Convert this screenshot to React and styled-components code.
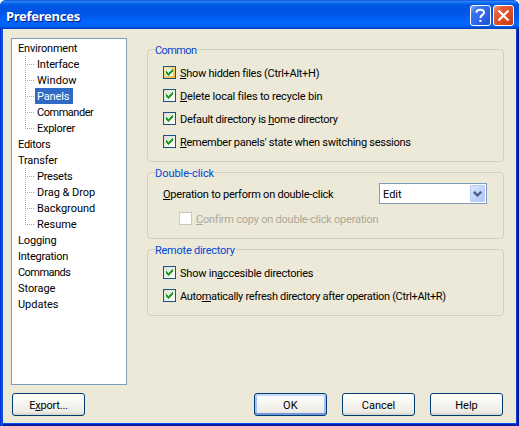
import React from "react";
import styled, { createGlobalStyle, css } from "styled-components";

const GlobalStyle = createGlobalStyle`
  * { box-sizing: border-box; }
  body { margin: 0; background: #fff; overflow: hidden; }
`;

const Window = styled.div`
  width: 519px;
  height: 426px;
  display: flex;
  flex-direction: column;
  padding: 0 3px 3px;
  background: linear-gradient(to right, #0831d9 0 1px, #0a50ea 1px 2px, #0855dd 2px 516px, #0441d8 516px 517px, #001ea0 517px 518px, #00138c 518px);
  border-radius: 6px 6px 0 0;
  overflow: hidden;
  font: 11px/13px Roboto, "Liberation Sans", sans-serif;
  color: #000;
`;

const TitleBar = styled.header`
  height: 29px;
  flex: none;
  margin: 0 -3px;
  padding: 2px 5px 0 6px;
  display: flex;
  align-items: center;
  gap: 2px;
  background: linear-gradient(
    to bottom,
    #0a51d8 0, #2b83f3 1.5px, #0f6af0 3px, #0058e6 5px, #0054e3 9px,
    #0055e5 13px, #0060f8 19px, #0066ff 24px, #0062f8 26px, #0048cc 28px, #003cbc 29px
  );
`;

const Title = styled.h1`
  flex: 1;
  margin: 0;
  font: bold 13px/16px "Noto Sans", sans-serif;
  letter-spacing: -0.27px;
  color: #fff;
  text-shadow: 1px 1px 0 #0a1883;
`;

const CaptionButton = styled.button`
  width: 21px;
  height: 21px;
  margin-bottom: 1px;
  padding: 0;
  display: grid;
  place-items: center;
  border: 1px solid #fff;
  border-radius: 3px;
  background: ${(p) =>
    p.$close
      ? "linear-gradient(135deg, #f0a08a 0, #e5603c 22%, #df4a22 60%, #c03a10 100%)"
      : "linear-gradient(135deg, #8cb0f5 0, #3c78f0 22%, #2a63e8 60%, #1c4fd0 100%)"};
`;

const Client = styled.main`
  flex: 1;
  min-height: 0;
  display: flex;
  flex-direction: column;
  justify-content: space-between;
  padding: 9px 11px 7px 8px;
  background: #ece9d8;
  box-shadow: 0 1px 0 #0050ee, 0 3px 0 #001ea0;
`;

const Body = styled.div`
  display: flex;
  gap: 20px;
`;

const Tree = styled.ul`
  width: 116px;
  height: 347px;
  flex: none;
  margin: 0;
  padding: 1px 0 0 4px;
  list-style: none;
  border: 1px solid #7f9db9;
  background: #fff;
`;

const Branch = styled.ul`
  margin: 0;
  padding: 0 0 0 9px;
  list-style: none;
`;

const Leaf = styled.li`
  height: 16px;
  display: flex;
  align-items: center;
  background:
    repeating-linear-gradient(to bottom, #aca899 0 1px, transparent 1px 2px) 0 0 / 1px ${(p) => (p.$last ? 8 : 16)}px no-repeat,
    repeating-linear-gradient(to right, #aca899 0 1px, transparent 1px 2px) 0 8px / 9px 1px no-repeat;
  padding-left: 10px;
`;

const TreeLabel = styled.span`
  display: block;
  width: max-content;
  height: 16px;
  padding: 1px 2px 0;
  line-height: 15px;
  white-space: nowrap;
  letter-spacing: ${(p) => p.$ls || 0}px;
  ${(p) =>
    p.$selected &&
    css`
      padding-right: 4px;
      background: #316ac5;
      color: #fff;
    `}
`;

const Options = styled.section`
  width: 357px;
  display: flex;
  flex-direction: column;
  gap: 10px;
  padding-top: 11px;
`;

const Group = styled.fieldset`
  position: relative;
  display: flex;
  flex-direction: column;
  gap: 10px;
  height: ${(p) => p.$height}px;
  margin: 0;
  padding: ${(p) => p.$top}px 15px 0;
  min-width: 0;
  border: 1px solid #d0d0bf;
  border-radius: 4px;
`;

const Legend = styled.div`
  position: absolute;
  top: -6px;
  left: 7px;
  padding: 0 1px 0 0;
  background: #ece9d8;
  color: #0046d5;
  letter-spacing: ${(p) => p.$ls || 0}px;
`;

const Text = styled.span`
  display: block;
  padding-top: 2px;
  white-space: nowrap;
  letter-spacing: ${(p) => p.$ls || 0}px;
  u {
    text-decoration: underline;
    text-decoration-thickness: 1px;
    text-underline-offset: 1px;
    text-decoration-skip-ink: none;
  }
`;

const OptionRow = styled.label`
  display: flex;
  align-items: center;
  gap: 4px;
  height: 13px;
  margin-left: ${(p) => (p.$indent ? 16 : 0)}px;
  color: ${(p) => (p.$disabled ? "#aca899" : "#000")};
`;

const Box = styled.span`
  width: 13px;
  height: 13px;
  flex: none;
  display: grid;
  place-items: center;
  border: 1px solid ${(p) => (p.$disabled ? "#cac8bb" : "#1c5180")};
  background: ${(p) => (p.$disabled ? "#fff" : "linear-gradient(135deg, #dcdcd7, #fff)")};
  ${(p) =>
    p.$hot &&
    css`
      background:
        linear-gradient(135deg, #ececea, #fff) center / 7px 7px no-repeat,
        linear-gradient(135deg, #fff0cf, #fbc761 60%, #f8b330);
    `}
`;

const SelectRow = styled.div`
  display: flex;
  align-items: center;
  justify-content: space-between;
  height: 21px;
  margin-right: 1px;
  margin-bottom: -2px;
`;

const Select = styled.div`
  width: 108px;
  height: 21px;
  display: flex;
  align-items: center;
  justify-content: space-between;
  padding: 1px 1px 1px 3px;
  border: 1px solid #7f9db9;
  background: #fff;
`;

const DropButton = styled.span`
  width: 15px;
  height: 17px;
  display: grid;
  place-items: center;
  border-radius: 1px;
  border: 1px solid #b9cdf8;
  background: linear-gradient(135deg, #dce8ff, #c2d5fc 50%, #afc6f5);
`;

const Footer = styled.footer`
  display: flex;
  gap: 15px;
  padding: 0 2px 0 1px;
`;

const PushButton = styled.button`
  width: 73px;
  height: 23px;
  padding: 0;
  border: 1px solid #003c74;
  border-radius: 3px;
  background: linear-gradient(to bottom, #fff, #f5f4ef 50%, #ecebe5 85%, #d6d0c5);
  font: inherit;
  color: #000;
  ${(p) =>
    p.$left &&
    css`
      margin-right: auto;
    `}
  ${(p) =>
    p.$primary &&
    css`
      box-shadow: inset 0 2px 0 #c6dbff, inset 0 -2px 0 #7496df, inset 2px 0 0 #a6c1f3, inset -2px 0 0 #a6c1f3;
    `}
`;

const Tick = () => (
  <svg width="7" height="7" viewBox="0 0 7 7" shapeRendering="crispEdges">
    <path
      fill="#21a121"
      d="M0 2h1v3H0zM1 3h1v3H1zM2 4h1v3H2zM3 3h1v3H3zM4 2h1v3H4zM5 1h1v3H5zM6 0h1v3H6z"
    />
  </svg>
);

const Question = () => (
  <svg width="13" height="15" viewBox="0 0 13 15" fill="none" stroke="#fff" strokeWidth="2">
    <path d="M2.5 4.8C2.5 .7 10 .7 10 4.4C10 7 6.4 6.8 6.4 10" />
    <path d="M6.4 11.7v2.3" />
  </svg>
);

const Cross = () => (
  <svg width="13" height="13" viewBox="0 0 13 13" stroke="#fff" strokeWidth="2.2">
    <path d="M1.5 1.5l10 10M11.5 1.5l-10 10" />
  </svg>
);

const Chevron = () => (
  <svg width="9" height="6" viewBox="0 0 9 6" fill="none" stroke="#4d6185" strokeWidth="2.4">
    <path d="M.7 .8l3.8 3.6L8.3 .8" />
  </svg>
);

function Option({ children, ls, hot, disabled, indent }) {
  return (
    <OptionRow $disabled={disabled} $indent={indent}>
      <Box $hot={hot} $disabled={disabled}>{!disabled && <Tick />}</Box>
      <Text $ls={ls}>{children}</Text>
    </OptionRow>
  );
}

const TREE = [
  ["Environment", -0.2, [["Interface", -0.18], ["Window", 0.05], ["Panels", -0.15], ["Commander", -0.47], ["Explorer", -0.26]]],
  ["Editors", -0.25],
  ["Transfer", -0.15, [["Presets", -0.25], ["Drag & Drop", -0.02], ["Background", -0.03], ["Resume", -0.05]]],
  ["Logging", -0.15],
  ["Integration", -0.24],
  ["Commands", -0.54],
  ["Storage", -0.06],
  ["Updates", -0.03],
];

export default function App() {
  return (
    <>
      <GlobalStyle />
      <Window>
        <TitleBar>
          <Title>Preferences</Title>
          <CaptionButton aria-label="Help"><Question /></CaptionButton>
          <CaptionButton $close aria-label="Close"><Cross /></CaptionButton>
        </TitleBar>
        <Client>
          <Body>
            <Tree>
              {TREE.map(([name, ls, children]) => (
                <li key={name}>
                  <TreeLabel $ls={ls}>{name}</TreeLabel>
                  {children && (
                    <Branch>
                      {children.map(([child, childLs], i) => (
                        <Leaf key={child} $last={i === children.length - 1}>
                          <TreeLabel $ls={childLs} $selected={child === "Panels"}>{child}</TreeLabel>
                        </Leaf>
                      ))}
                    </Branch>
                  )}
                </li>
              ))}
            </Tree>
            <Options>
              <Group $height={113} $top={16}>
                <Legend $ls={-0.6}>Common</Legend>
                <Option hot ls={-0.28}><u>S</u>how hidden files (Ctrl+Alt+H)</Option>
                <Option ls={-0.17}><u>D</u>elete local files to recycle bin</Option>
                <Option ls={-0.3}>Default directory is <u>h</u>ome directory</Option>
                <Option ls={-0.265}><u>R</u>emember panels' state when switching sessions</Option>
              </Group>
              <Group $height={67} $top={10}>
                <Legend $ls={-0.05}>Double-click</Legend>
                <SelectRow>
                  <Text $ls={-0.23}><u>O</u>peration to perform on double-click</Text>
                  <Select>
                    <Text $ls={0}>Edit</Text>
                    <DropButton><Chevron /></DropButton>
                  </Select>
                </SelectRow>
                <Option disabled indent ls={-0.23}><u>C</u>onfirm copy on double-click operation</Option>
              </Group>
              <Group $height={67} $top={16}>
                <Legend $ls={-0.25}>Remote directory</Legend>
                <Option ls={-0.22}>Show in<u>a</u>ccesible directories</Option>
                <Option ls={-0.32}>Auto<u>m</u>atically refresh directory after operation (Ctrl+Alt+R)</Option>
              </Group>
            </Options>
          </Body>
          <Footer>
            <PushButton $left><Text $ls={-0.22}>E<u>x</u>port...</Text></PushButton>
            <PushButton $primary><Text $ls={0.2}>OK</Text></PushButton>
            <PushButton><Text $ls={0}>Cancel</Text></PushButton>
            <PushButton><Text $ls={0}>Help</Text></PushButton>
          </Footer>
        </Client>
      </Window>
    </>
  );
}
